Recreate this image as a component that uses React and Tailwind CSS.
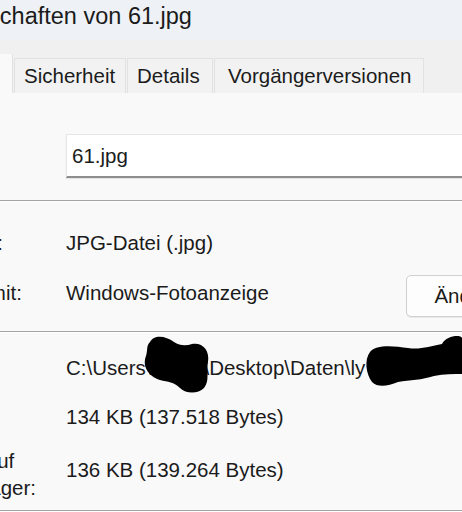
const font = { fontFamily: '"Liberation Sans", Arial, sans-serif' };

function Tab({ children, className = "" }) {
  return (
    <div
      className={`flex h-[35px] items-center border border-b-0 border-[#e2e2e2] bg-[#f2f2f2] px-[9px] text-[20.5px] leading-none text-[#1b1b1b] ${className}`}
    >
      {children}
    </div>
  );
}

function Separator() {
  return (
    <div>
      <div className="h-px bg-[#a3a3a3]" />
      <div className="h-px bg-white" />
    </div>
  );
}

function Row({ label, children, className = "" }) {
  return (
    <div className={`flex items-center ${className}`}>
      <div className="w-[144px] shrink-0 leading-[27px] whitespace-nowrap">{label}</div>
      <div className="whitespace-nowrap leading-[24px]">{children}</div>
    </div>
  );
}

export default function App() {
  return (
    <div
      className="relative h-[512px] w-[462px] overflow-hidden bg-[#f9f9f9] text-[#1b1b1b]"
      style={font}
    >
      {/* title */}
      <div className="h-[40px] bg-[#eef2f7] pt-[2px]">
        <div className="-ml-[72px] whitespace-nowrap text-[23.5px] leading-[28px]">
          Eigenschaften von 61.jpg
        </div>
      </div>

      {/* tabs */}
      <div className="flex h-[53px] items-end bg-[#f0f0f0]">
        <div className="h-[39px] w-[13px] border-r border-[#e2e2e2] bg-[#f9f9f9]" />
        <Tab className="ml-px w-[112px]">Sicherheit</Tab>
        <Tab className="ml-px w-[86px]">Details</Tab>
        <Tab className="ml-px w-[210px] pl-[13px]">Vorgängerversionen</Tab>
      </div>

      {/* content */}
      <div className="-ml-[78px] text-[20.5px]">
        <Row label="" className="pt-[41px]">
          <div className="flex h-[44px] w-[420px] items-center border border-b-2 border-[#e6e6e6] border-b-[#8e8e8e] bg-white pl-[5px] shadow-[0_1px_1px_rgba(0,0,0,0.08)]">
            61.jpg
          </div>
        </Row>
      </div>

      <div className="mt-[22px]">
        <Separator />
      </div>

      <div className="-ml-[78px] text-[20.5px]">
        <Row label="Dateityp:" className="mt-[27px]">
          JPG-Datei (.jpg)
        </Row>
        <div className="mt-[19px] flex h-[42px] items-center">
          <div className="w-[144px] shrink-0 whitespace-nowrap -mt-[5px]">Öffnen mit:</div>
          <div className="w-[340px] shrink-0 whitespace-nowrap -mt-[5px]">Windows-Fotoanzeige</div>
          <button className="flex h-[42px] w-[140px] shrink-0 items-center justify-center rounded-[5px] border border-[#d0d0d0] bg-[#fdfdfd] text-[20.5px] shadow-[0_1px_0_rgba(0,0,0,0.06)]">
            Ändern...
          </button>
        </div>
      </div>

      <div className="mt-[14px]">
        <Separator />
      </div>

      <div className="-ml-[78px] text-[20.5px]">
        <Row label="Ort:" className="mt-[21px]">
          C:\Users\<span className="inline-block w-[52px]" />\Desktop\Daten\ly
        </Row>
        <Row label="Größe:" className="mt-[22px]">
          134 KB (137.518 Bytes)
        </Row>
        <Row
          label={
            <>
              Größe auf
              <br />
              Datenträger:
            </>
          }
          className="mt-[17px]"
        >
          <span className="relative -top-[4px]">136 KB (139.264 Bytes)</span>
        </Row>
      </div>

      <div className="mt-[9px]">
        <Separator />
      </div>

      {/* redaction scribbles */}
      <svg className="absolute left-[140px] top-[332px]" width="74" height="64" viewBox="0 0 74 64">
        <path
          d="M10 10 C 14 2, 26 4, 34 10 C 40 14, 46 14, 52 12 C 62 10, 70 18, 68 30 C 66 40, 70 48, 64 56 C 58 62, 46 62, 40 56 C 34 50, 28 50, 20 48 C 8 44, 2 34, 6 24 C 8 18, 6 14, 10 10 Z"
          fill="#000"
        />
      </svg>
      <svg className="absolute left-[364px] top-[334px]" width="98" height="56" viewBox="0 0 98 56">
        <path
          d="M6 18 C 12 10, 30 12, 44 14 C 56 16, 66 12, 78 10 C 82 2, 96 0, 98 4 L 98 40 C 90 40, 80 40, 70 42 C 58 46, 46 46, 34 48 C 24 52, 14 54, 8 48 C 2 40, 0 26, 6 18 Z"
          fill="#000"
        />
      </svg>
    </div>
  );
}
